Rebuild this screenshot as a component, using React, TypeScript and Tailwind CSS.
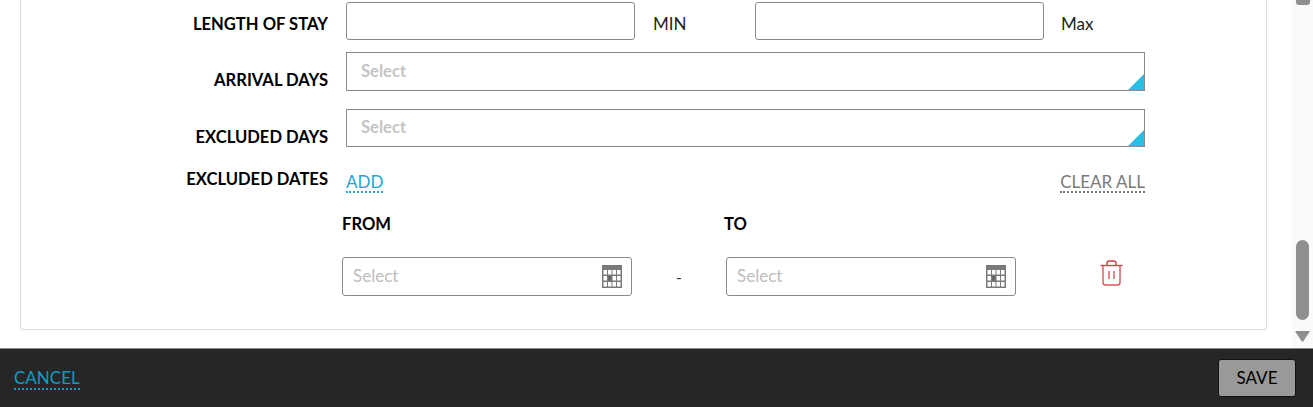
import React from "react";

function Cal() {
  return (
    <svg width="20" height="23" viewBox="0 0 20 23" className="shrink-0">
      <rect x="0" y="0" width="20" height="23" fill="#7a7a7a" />
      {[5, 11, 17].map((y) =>
        [1.5, 6, 10.5, 15].map((x) => (
          <rect
            key={`${x}-${y}`}
            x={x}
            y={y}
            width="3.5"
            height="4.5"
            fill={x === 6 && y === 11 ? "#6a6a6a" : "#ffffff"}
          />
        ))
      )}
    </svg>
  );
}

function Trash() {
  return (
    <svg width="23" height="26" viewBox="0 0 23 26" fill="none" stroke="#d9555d" strokeWidth="1.4">
      <path d="M0.5 5.5H22.5" stroke="#d43f48" />
      <path d="M7 5V3.2C7 1.8 8 1 9.2 1h4.6C15 1 16 1.8 16 3.2V5" stroke="#d43f48" />
      <path d="M3 5.5V22.5C3 24 4 25 5.5 25h12c1.5 0 2.5-1 2.5-2.5V5.5" />
      <path d="M9 11v8M14 11v8" />
    </svg>
  );
}

function Corner() {
  return (
    <svg width="16" height="16" viewBox="0 0 16 16" className="absolute right-0 bottom-0">
      <polygon points="16,0 16,16 0,16" fill="#29bfe3" />
    </svg>
  );
}

function Label({ children, className = "" }: { children: React.ReactNode; className?: string }) {
  return (
    <div className={`w-[307px] shrink-0 text-right text-[16.6px] leading-[20px] font-bold text-black ${className}`}>
      {children}
    </div>
  );
}

function DateBox() {
  return (
    <div className="w-[290px] h-[39px] border border-[#8a8a8a] rounded-[3px] flex items-center justify-between pl-[10px] pr-[9px] text-[17px] text-[#bdbdbd]">
      <span className="-mt-px">Select</span>
      <Cal />
    </div>
  );
}

function SelectBox({ h, pt }: { h: string; pt: string }) {
  return (
    <div className={`relative w-[799px] ${h} ${pt} border border-[#8a8a8a] pl-[14px] text-[16.6px] leading-[20px] font-bold text-[#c4c4c4]`}>
      Select
      <Corner />
    </div>
  );
}

export default function App() {
  return (
    <div className="w-[1313px] h-[407px] flex flex-col overflow-hidden bg-white font-['Lato','Noto_Sans',sans-serif]">
      <div className="h-[348px] flex shrink-0 overflow-hidden">
        <div className="w-[1292px] pl-[20px] pr-[25px] flex flex-col">
          <div className="h-[330px] border-x border-b border-[#dcdcdc] rounded-b-[3px] flex flex-col pt-[2px]">
            <div className="flex h-[38px]">
              <Label className="mr-[18px] pt-[12px]">LENGTH OF STAY</Label>
              <div className="w-[289px] h-[38px] border border-[#8a8a8a] rounded-[3px]" />
              <div className="w-[120px] pl-[18px] pt-[12px] text-[17px] leading-[20px] text-[#222]">MIN</div>
              <div className="w-[289px] h-[38px] border border-[#8a8a8a] rounded-[3px]" />
              <div className="pl-[17px] pt-[12px] text-[17px] leading-[20px] text-[#222]">Max</div>
            </div>
            <div className="flex mt-[12px]">
              <Label className="mr-[18px] pt-[18px]">ARRIVAL DAYS</Label>
              <SelectBox h="h-[39px]" pt="pt-[8px]" />
            </div>
            <div className="flex mt-[18px]">
              <Label className="mr-[18px] pt-[18px]">EXCLUDED DAYS</Label>
              <SelectBox h="h-[38px]" pt="pt-[7px]" />
            </div>
            <div className="flex mt-[21px] h-[26px]">
              <Label className="mr-[18px] pt-px">EXCLUDED DATES</Label>
              <div className="w-[799px] flex justify-between items-start pt-[4px] text-[17px] leading-[19px]">
                <span className="text-[#1ea7cf] border-b-2 border-dotted border-[#1ea7cf]">ADD</span>
                <span className="text-[#7a7a7a] border-b-2 border-dotted border-[#7a7a7a]">CLEAR ALL</span>
              </div>
            </div>
            <div className="flex pl-[321px] mt-[20px] text-[16.6px] leading-[20px] font-bold text-black">
              <div className="w-[382px]">FROM</div>
              <div>TO</div>
            </div>
            <div className="flex items-center pl-[321px] mt-[23px]">
              <DateBox />
              <div className="w-[94px] text-center text-[16px] text-[#333]">-</div>
              <DateBox />
              <div className="ml-[84px] -mt-[7px] flex">
                <Trash />
              </div>
            </div>
          </div>
        </div>
        <div className="w-[21px] bg-[#fafafa] flex flex-col items-center">
          <div className="h-[6px] w-[14px] bg-[#8f8f8f] rounded-b-[3px] -mt-px" />
          <div className="flex-1 flex flex-col justify-end items-center">
            <div className="w-[13px] h-[80px] rounded-[7px] bg-[#8f8f8f]" />
            <svg width="15" height="11" viewBox="0 0 15 11" className="mt-[11px] mb-[6px]">
              <path d="M1 0H14Q15 0 14.5 1L8.2 10.5Q7.5 11 6.8 10.5L0.5 1Q0 0 1 0Z" fill="#8f8f8f" />
            </svg>
          </div>
        </div>
      </div>
      <div className="flex-1 bg-[#262626] border-t border-[#8a8a8a] flex items-center justify-between pl-[14px] pr-[17px]">
        <span className="text-[#0f9cc4] text-[17px] leading-[20px] border-b-2 border-dotted border-[#0f9cc4] mt-[2px]">CANCEL</span>
        <button className="w-[78px] h-[38px] bg-[#999999] border border-[#111] rounded-[3px] text-[17px] text-black">SAVE</button>
      </div>
    </div>
  );
}
